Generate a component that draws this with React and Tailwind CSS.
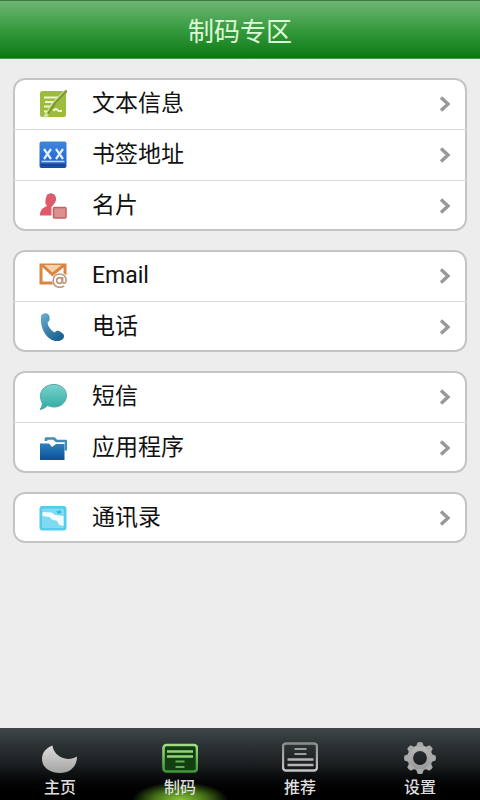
import React from "react";

const TextIcon = () => (
  <svg viewBox="0 0 28 28" className="size-7">
    <rect x="1" y="1" width="26" height="26" rx="2.500" fill="#9dbb3c" />
    <path d="M5 7.500h15M6 12h11M5 16.500h7M5 21.500h4M14 20.500l3-1.500 3 2h3" stroke="#eef5cf" strokeWidth="2" fill="none" />
    <path d="M27 1L14 14l-4 7-4 6" stroke="#d3e39a" strokeWidth="3.600" fill="none" />
    <path d="M28 .5L16 13l-4 6-3 5" stroke="#7f992f" strokeWidth="2.400" fill="none" />
  </svg>
);

const BookmarkIcon = () => (
  <svg viewBox="0 0 28 28" className="size-7">
    <defs>
      <linearGradient id="bookmark" x1="0" y1="0" x2="0" y2="1">
        <stop offset="0" stopColor="#3f86dc" />
        <stop offset="0.75" stopColor="#2567d2" />
        <stop offset="1" stopColor="#174aa0" />
      </linearGradient>
    </defs>
    <rect x="0.500" y="0.500" width="27" height="26.500" rx="2" fill="url(#bookmark)" />
    <path d="M5 8l7 10M12 8l-7 10M17 8l7 10M24 8l-7 10" stroke="#e4efff" strokeWidth="2.200" />
    <path d="M2.500 20.500h23" stroke="#b9d4fa" strokeWidth="1.600" />
    <path d="M2 24h24" stroke="#1b4695" strokeWidth="2" />
  </svg>
);

const CardIcon = () => (
  <svg viewBox="0 0 28 28" className="size-7">
    <path d="M1 23.500c0-5 2-7.500 7-9.500-2-2-2-4.500-1-8.500C8 3 9.500 1.500 12 1.500c4 0 5 3 4 7l-2 5v10z" fill="#e05a6b" />
    <path d="M8 4c2-3 7-2 8 1s0 5-2 7" fill="none" stroke="#c66a70" strokeWidth="1.500" />
    <rect x="12.500" y="13.500" width="15.500" height="14" rx="2" fill="#fff" />
    <rect x="14.500" y="15.500" width="12.500" height="10.500" rx="1" fill="#d99190" stroke="#c45e62" strokeWidth="1.500" />
  </svg>
);

const EmailIcon = () => (
  <svg viewBox="0 0 28 28" className="size-7">
    <path d="M26 13V3H2v18h12" fill="none" stroke="#d98642" strokeWidth="3" />
    <path d="M3 3l10.500 9.500L25 3" fill="#f6d3af" stroke="#d98642" strokeWidth="3" />
    <circle cx="21" cy="18.500" r="8" fill="#fff" />
    <circle cx="20.500" cy="18.500" r="2.800" fill="none" stroke="#bd9878" strokeWidth="1.700" />
    <path d="M23.600 15v4.500c0 3 3.600 2 3.600-1.500 0-8-13-8-13 .5 0 7 7 8 11 5.500" fill="none" stroke="#bd9878" strokeWidth="1.600" />
  </svg>
);

const PhoneIcon = () => (
  <svg viewBox="0 0 28 28" className="size-7">
    <defs>
      <linearGradient id="phone" x1="0" y1="0" x2="0.600" y2="1">
        <stop offset="0" stopColor="#6baed2" />
        <stop offset="1" stopColor="#1b6592" />
      </linearGradient>
    </defs>
    <path d="M3 1.500C6-.5 9.500 0 10.500 3.500 11 6.500 10.500 8.500 8.500 9.500c.5 4 3 7.500 7 10 2-2 3.500-2 5.500-1 2 1.200 4 2.500 4 4.500 0 3.500-3 5-7 5C8 28 1 15 2 5c0-1.500 0-2.500 1-3.500z" fill="url(#phone)" />
  </svg>
);

const SmsIcon = () => (
  <svg viewBox="0 0 28 28" className="size-7">
    <defs>
      <linearGradient id="sms" x1="0" y1="0" x2="0" y2="1">
        <stop offset="0" stopColor="#79d3cb" />
        <stop offset="1" stopColor="#31a9a5" />
      </linearGradient>
    </defs>
    <path d="M15 1.500c7.500 0 12.500 5 12.500 11s-5 11.500-12 11.500c-3 0-5-.7-7-1.500-2 2-4.500 3.500-7.500 4 1.500-2 2.300-4 2.300-6.500C2 18 1.500 15.500 1.500 12.500c0-6 5.500-11 13.500-11z" fill="url(#sms)" stroke="#55a9a5" />
  </svg>
);

const AppsIcon = () => (
  <svg viewBox="0 0 28 28" className="size-7">
    <defs>
      <linearGradient id="apps" x1="0" y1="0" x2="0" y2="1">
        <stop offset="0" stopColor="#2c82bd" />
        <stop offset="1" stopColor="#0b4f99" />
      </linearGradient>
    </defs>
    <path d="M7 7V4.500h8L17.500 7H27v9.500" fill="none" stroke="#3f8db8" strokeWidth="2.600" strokeLinejoin="round" />
    <path d="M1 9.500h9l3 3.500 4-3h8.500V26H1z" fill="url(#apps)" />
  </svg>
);

const ContactsIcon = () => (
  <svg viewBox="0 0 28 28" className="size-7">
    <rect x="0.500" y="2" width="27" height="24.500" rx="3" fill="#52cbec" />
    <rect x="3" y="4.500" width="22" height="19.500" rx="1" fill="#7edbf3" />
    <path d="M3.500 8l9 .5 3.500 2.500 8.500 1v10l-4-1-3-4.500-4-.5-3-3-7-1z" fill="#f4fdff" />
    <path d="M17 7.500l4.500-1 1 2-3 1.500z" fill="#35b4dc" />
  </svg>
);

const Chevron = () => (
  <svg viewBox="0 0 12 16" className="h-4 w-3" fill="none" stroke="#999" strokeWidth="3.400">
    <path d="M2 1.500L9 8l-7 6.500" />
  </svg>
);

const MoonIcon = () => (
  <svg viewBox="0 0 36 32" className="h-8 w-9">
    <defs>
      <linearGradient id="moon" x1="0" y1="0" x2="0" y2="1">
        <stop offset="0" stopColor="#dcdcdc" />
        <stop offset="1" stopColor="#a4a4a4" />
      </linearGradient>
    </defs>
    <path d="M10.500 3.500C4 6 0 10.500 0 17c0 8.500 8 14 18 14 9.500 0 17-6 17-16.500-3.500 2-8 3-12 2C16 15 11 9.500 10.500 3.500z" fill="url(#moon)" />
  </svg>
);

const CodeIcon = () => (
  <svg viewBox="0 0 36 32" className="h-8 w-9" fill="none">
    <defs>
      <linearGradient id="code" x1="0" y1="0" x2="0" y2="1">
        <stop offset="0" stopColor="#a2dc86" />
        <stop offset="1" stopColor="#3c9a35" />
      </linearGradient>
    </defs>
    <rect x="1.500" y="3" width="33.500" height="26.500" rx="3" fill="#123e12" stroke="url(#code)" strokeWidth="2.600" />
    <path d="M5 9.500h26M5 14.500h26" stroke="#94d27b" strokeWidth="2.600" />
    <path d="M13.500 19.500h9M13.500 25h9" stroke="#5fae50" strokeWidth="2.200" />
  </svg>
);

const RecommendIcon = () => (
  <svg viewBox="0 0 36 32" className="h-8 w-9" fill="none">
    <defs>
      <linearGradient id="recommend" x1="0" y1="0" x2="0" y2="1">
        <stop offset="0" stopColor="#8b8e8f" />
        <stop offset="1" stopColor="#c4c4c4" />
      </linearGradient>
    </defs>
    <rect x="1" y="1.500" width="34" height="27" rx="3" stroke="url(#recommend)" strokeWidth="2.400" />
    <path d="M12.500 7h12M12.500 12h12" stroke="#9a9c9d" strokeWidth="2" />
    <path d="M5.500 17.500h26M5.500 23h26" stroke="#b4b4b4" strokeWidth="2.400" />
  </svg>
);

const teeth = [0, 45, 90, 135, 180, 225, 270, 315];

const GearIcon = () => (
  <svg viewBox="0 0 36 32" className="h-8 w-9">
    <defs>
      <linearGradient id="gear" gradientUnits="userSpaceOnUse" x1="0" y1="0" x2="0" y2="32">
        <stop offset="0" stopColor="#bdbdbd" />
        <stop offset="1" stopColor="#919191" />
      </linearGradient>
    </defs>
    <circle cx="18" cy="16" r="9.800" fill="none" stroke="url(#gear)" strokeWidth="5.800" />
    {teeth.map((angle) => (
      <path key={angle} d="M14 5l1.500-4.500q2.500-1 5 0L22 5z" fill="#a9a9a9" transform={`rotate(${angle} 18 16)`} />
    ))}
  </svg>
);

const groups = [
  [
    { label: "文本信息", Icon: TextIcon },
    { label: "书签地址", Icon: BookmarkIcon },
    { label: "名片", Icon: CardIcon },
  ],
  [
    { label: "Email", Icon: EmailIcon },
    { label: "电话", Icon: PhoneIcon },
  ],
  [
    { label: "短信", Icon: SmsIcon },
    { label: "应用程序", Icon: AppsIcon },
  ],
  [{ label: "通讯录", Icon: ContactsIcon }],
];

const tabs = [
  { label: "主页", Icon: MoonIcon },
  { label: "制码", Icon: CodeIcon, active: true },
  { label: "推荐", Icon: RecommendIcon },
  { label: "设置", Icon: GearIcon },
];

export default function App() {
  return (
    <div className="flex min-h-screen flex-col bg-[#ededed] font-['Roboto','Noto_Sans_CJK_SC',sans-serif]">
      <header className="flex h-[59px] items-center justify-center border-t border-b border-t-[#3f7a41] border-b-[#4f9a50] bg-linear-to-b from-[#6cb673] via-[#369a3f] to-[#037a0c] pt-1">
        <h1 className="text-[26px] leading-8 text-[#dcf8d6]">制码专区</h1>
      </header>

      <main className="flex flex-1 flex-col gap-[19px] px-[13px] py-[19px]">
        {groups.map((group) => (
          <ul key={group[0].label} className="rounded-xl bg-white pt-px ring-2 ring-[#c4c4c4] ring-inset">
            {group.map(({ label, Icon }) => (
              <li key={label} className="border-[#dadada] not-first:border-t">
                <button type="button" className="flex h-[50px] w-full items-center pr-4 pl-[26px] text-left">
                  <Icon />
                  <span className="ml-[25px] flex-1 text-[23px] leading-8 text-[#111]">{label}</span>
                  <Chevron />
                </button>
              </li>
            ))}
          </ul>
        ))}
      </main>

      <nav className="grid h-18 grid-cols-4 bg-linear-to-b from-[#3e4648] via-[#1b1f21] to-black">
        {tabs.map(({ label, Icon, active }) => (
          <button
            key={label}
            type="button"
            className={
              active
                ? "flex flex-col items-center gap-0.5 bg-[radial-gradient(ellipse_48px_18px_at_50%_100%,#8cc63a,#4a7a1a_50%,transparent)] pt-3.5"
                : "flex flex-col items-center gap-0.5 pt-3.5"
            }
          >
            <Icon />
            <span className="text-base leading-6 font-medium text-[#dedede]">{label}</span>
          </button>
        ))}
      </nav>
    </div>
  );
}
